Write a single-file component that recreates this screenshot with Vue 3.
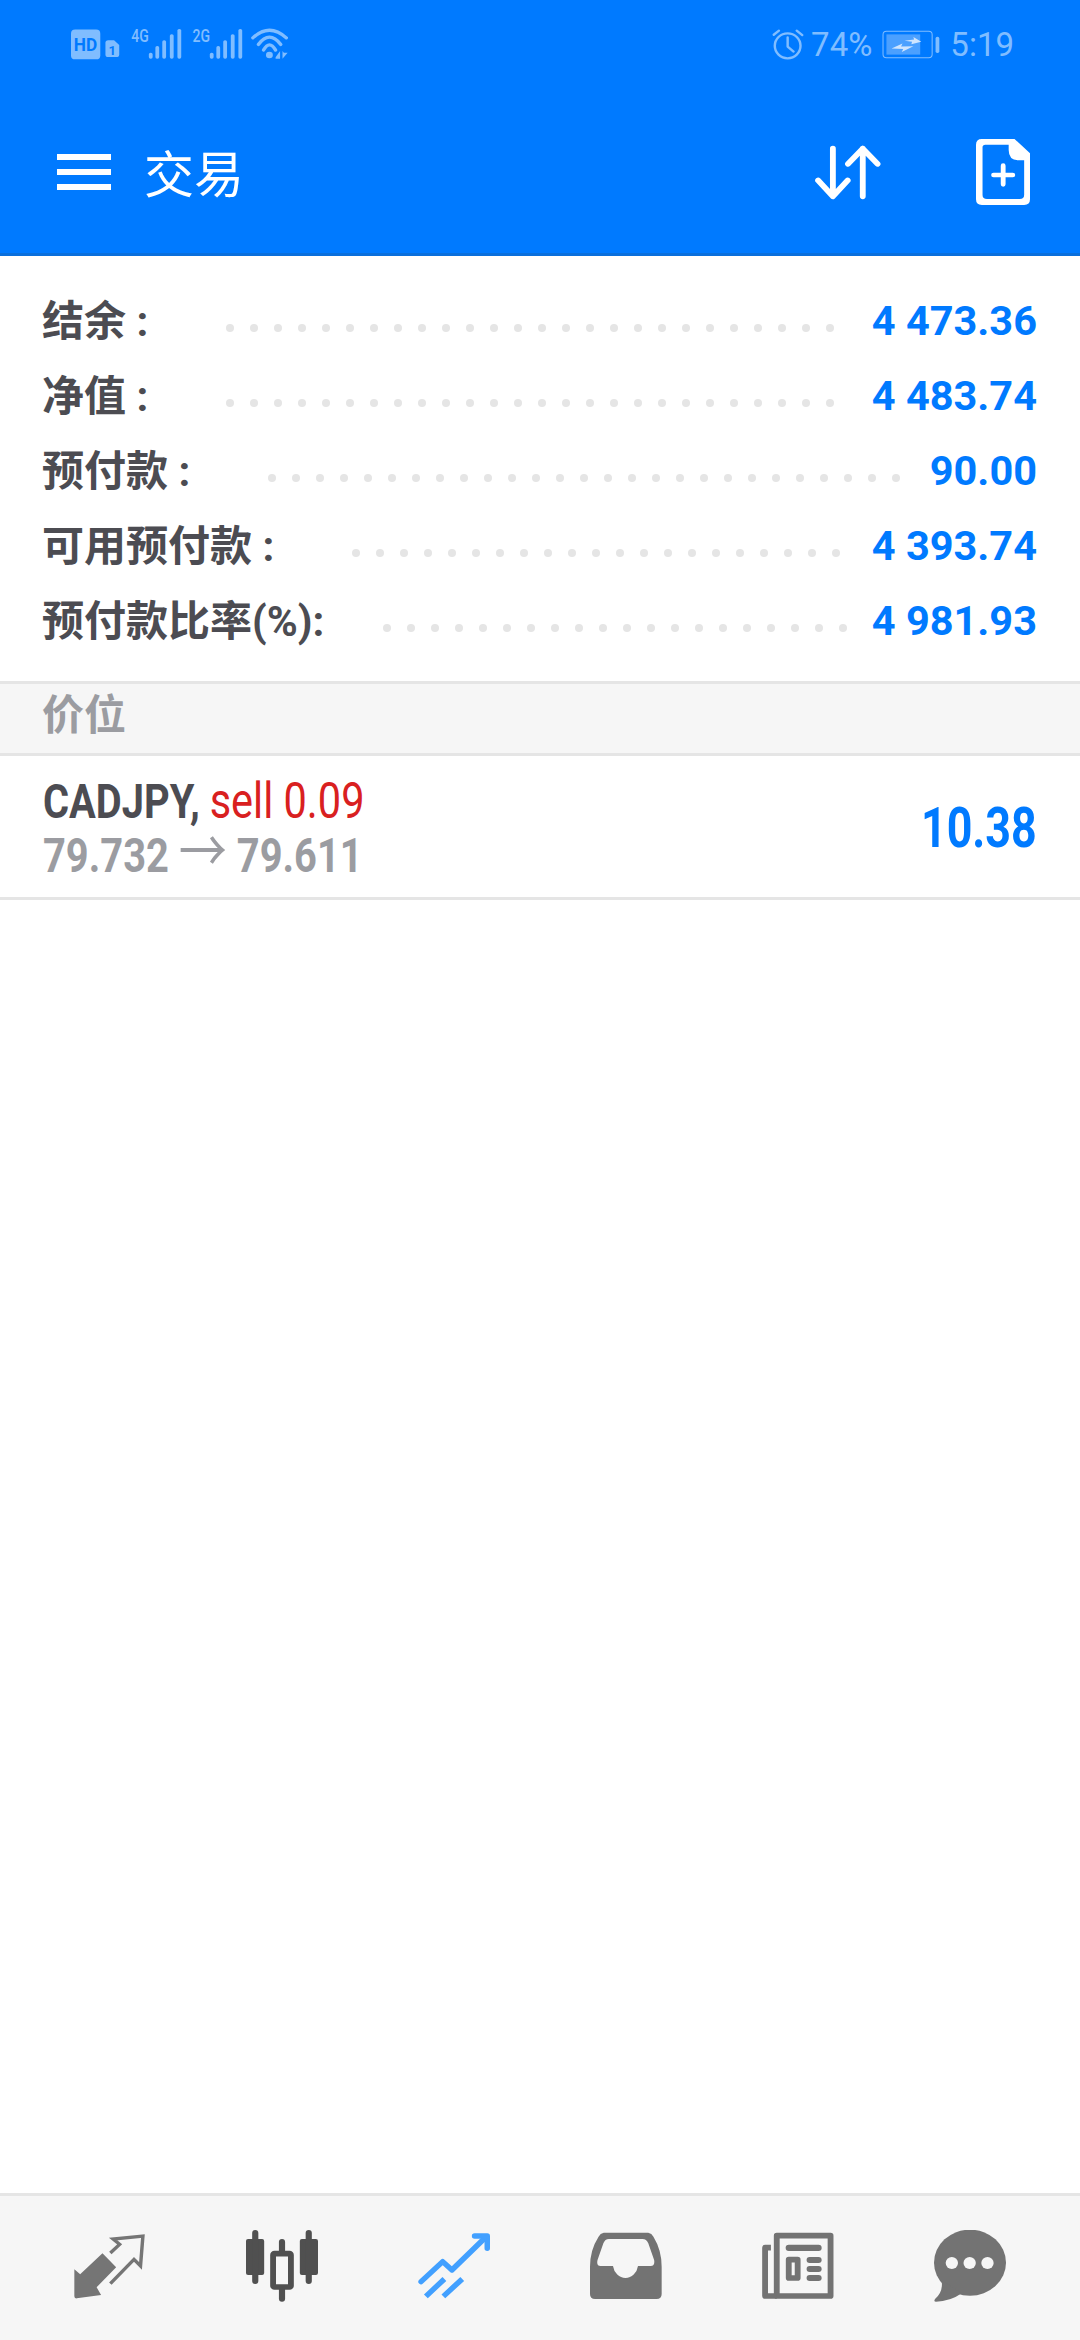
<template>
  <div class="page">
    <header class="top">
      <div class="status">
        <svg class="status-left" viewBox="207 55 630 130" preserveAspectRatio="none">
          <rect x="207" y="90" width="85" height="90" rx="12" fill="#80bdff" />
          <text x="249" y="156" class="st-hd" text-anchor="middle" textLength="68" lengthAdjust="spacingAndGlyphs">HD</text>
          <path d="M315 122H332L347 137V165Q347 173 339 173H315Q307 173 307 165V130Q307 122 315 122Z" fill="#80bdff" />
          <text x="327" y="166" class="st-sim" text-anchor="middle">1</text>
          <text x="382" y="128" class="st-net" textLength="51" lengthAdjust="spacingAndGlyphs">4G</text>
          <text x="560" y="128" class="st-net" textLength="51" lengthAdjust="spacingAndGlyphs">2G</text>
          <g v-for="dx in [0, 177]" :key="dx" :transform="`translate(${dx} 0)`">
            <rect v-for="b in bars" :key="b.x" :x="b.x" :y="b.y" width="11" :height="178 - b.y" rx="5" fill="#80bdff" />
          </g>
          <g fill="none" stroke="#80bdff" stroke-width="10" stroke-linecap="round">
            <path d="M735 115Q783 69 832 115" />
            <path d="M751 135Q783 91 816 135" />
            <path d="M766 152Q783 120 801 152" />
          </g>
          <circle cx="783" cy="167" r="10" fill="#80bdff" />
          <path d="M801 174L814 155V178H801ZM821 155V178L836 160H825Z" fill="#80bdff" />
        </svg>
        <div class="status-right">
          <svg class="alarm" viewBox="675 85 92 95" preserveAspectRatio="none">
            <g fill="none" stroke="#80bdff" stroke-linecap="round">
              <circle cx="720" cy="135" r="37" stroke-width="7" />
              <path d="M680 102L695 90M746 90L762 103" stroke-width="7" />
              <path d="M720 110V137L737 152" stroke-width="7" stroke-linejoin="round" />
            </g>
          </svg>
          <span class="status-text pct">74%</span>
          <svg class="battery" viewBox="990 90 170 86" preserveAspectRatio="none">
            <rect x="993" y="94" width="144" height="78" rx="10" fill="none" stroke="#80bdff" stroke-width="3" />
            <rect x="1003" y="103" width="99" height="60" fill="#4ba0ff" />
            <path d="M1018 145L1050 130L1046 139L1082 138L1048 155L1052 146ZM1056 122L1084 118L1082 111L1105 125L1076 132L1078 125Z" fill="#cfe5ff" />
            <rect x="1147" y="110" width="11" height="48" rx="5" fill="#80bdff" />
          </svg>
          <span class="status-text time">5:19</span>
        </div>
      </div>
      <div class="toolbar">
        <span class="burger"><i></i><i></i><i></i></span>
        <span class="title">交易</span>
        <svg class="tool-sort" viewBox="790 430 198 172" preserveAspectRatio="none">
          <path d="M845 444V588M802 540L845 588L888 540M932 444V588M889 490L932 444L975 490" fill="none" stroke="#fff" stroke-width="17" stroke-linecap="round" stroke-linejoin="round" />
        </svg>
        <svg class="tool-doc" viewBox="1263 417 157 198" preserveAspectRatio="none">
          <path fill-rule="evenodd" fill="#fff" d="M1280 417H1375L1420 460V598Q1420 615 1403 615H1280Q1263 615 1263 598V434Q1263 417 1280 417ZM1290 434Q1282 434 1282 442V585Q1282 597 1295 597H1390Q1403 597 1403 585V481H1385Q1358 480 1358 450V434Z" />
          <path d="M1342 497V553M1314 525H1370" fill="none" stroke="#fff" stroke-width="14" stroke-linecap="round" />
        </svg>
      </div>
    </header>

    <main class="content">
      <section class="summary">
        <div v-for="row in summary" :key="row.label" class="sum-row">
          <span class="sum-label" :style="{ width: row.dotsAt - 42 + 'px' }">{{ row.label }}</span>
          <span class="sum-dots"><i v-for="n in row.dots" :key="n"></i></span>
          <span class="sum-value">{{ row.value }}</span>
        </div>
      </section>
      <div class="section-head">价位</div>
      <div class="position">
        <div class="pos-left">
          <div class="pos-line"><b>CADJPY,</b> <span class="pos-side">sell 0.09</span></div>
          <div class="pos-line pos-price">79.732 <span class="pos-arrow">→</span> 79.611</div>
        </div>
        <div class="pos-profit">10.38</div>
      </div>
    </main>

    <nav class="tabs">
      <svg class="tab" viewBox="214 150 210 216" preserveAspectRatio="none">
        <path d="M215 268L232 283L297 220L337 262L280 322L293 345L222 355Q215 356 215 349Z" fill="#757575" />
        <path d="M320 219L347 193L328 177L415 168L408 258L389 238L320 311" fill="none" stroke="#757575" stroke-width="10" />
      </svg>
      <svg class="tab" viewBox="714 150 210 216" preserveAspectRatio="none">
        <g fill="#505050">
          <rect x="714" y="177" width="53" height="108" rx="6" />
          <rect x="732" y="150" width="18" height="162" rx="9" />
          <rect x="871" y="177" width="53" height="108" rx="6" />
          <rect x="888" y="150" width="18" height="162" rx="9" />
          <rect x="810" y="177" width="18" height="188" rx="9" />
        </g>
        <rect x="793" y="221" width="52" height="100" rx="4" fill="#f6f6f6" stroke="#505050" stroke-width="17" />
      </svg>
      <svg class="tab" viewBox="1213 150 210 216" preserveAspectRatio="none">
        <g fill="none" stroke="#42a0ff" stroke-width="16" stroke-linejoin="round">
          <path d="M1222 305L1285 245L1312 270L1408 174" stroke-linecap="round" />
          <path d="M1378 168H1415V205" stroke-linecap="round" />
          <path d="M1236 349L1290 297M1287 349L1342 297" />
        </g>
      </svg>
      <svg class="tab" viewBox="145 150 210 216" preserveAspectRatio="none">
        <path fill-rule="evenodd" fill="#737373" d="M185 158H315Q325 160 330 170Q354 210 354 260V342Q354 357 339 357H160Q145 357 145 342V260Q145 210 170 170Q175 160 185 158ZM200 177Q189 177 184 190L167 240Q163 258 176 258H212A37 43 0 0 0 285 258H322Q335 258 332 240L315 190Q310 177 298 177Z" />
      </svg>
      <svg class="tab" viewBox="645 150 210 216" preserveAspectRatio="none">
        <g fill="none" stroke="#737373" stroke-width="17" stroke-linejoin="round">
          <rect x="688" y="167" width="157" height="181" />
          <path d="M671 203H654V348H688" />
          <rect x="723" y="239" width="26" height="55" />
        </g>
        <g fill="#737373">
          <rect x="714" y="194" width="105" height="19" rx="9" />
          <rect x="775" y="231" width="44" height="18" rx="9" />
          <rect x="775" y="258" width="44" height="18" rx="9" />
          <rect x="775" y="285" width="44" height="18" rx="9" />
        </g>
      </svg>
      <svg class="tab" viewBox="1144 150 210 216" preserveAspectRatio="none">
        <ellipse cx="1249" cy="248" rx="105" ry="99" fill="#737373" />
        <path d="M1166 300Q1172 335 1147 357Q1142 365 1150 365Q1190 365 1225 340Z" fill="#737373" />
        <g fill="#f6f6f6">
          <circle cx="1196" cy="249" r="18" />
          <circle cx="1248" cy="249" r="18" />
          <circle cx="1300" cy="249" r="18" />
        </g>
      </svg>
    </nav>
  </div>
</template>

<script setup>
const bars = [
  { x: 433, y: 160 },
  { x: 452, y: 140 },
  { x: 472, y: 122 },
  { x: 494, y: 104 },
  { x: 516, y: 88 }
]

// dotsAt = x of the first leader dot, dots = how many of them
const summary = [
  { label: '结余 :', value: '4 473.36', dotsAt: 226, dots: 26 },
  { label: '净值 :', value: '4 483.74', dotsAt: 226, dots: 26 },
  { label: '预付款 :', value: '90.00', dotsAt: 268, dots: 27 },
  { label: '可用预付款 :', value: '4 393.74', dotsAt: 352, dots: 21 },
  { label: '预付款比率(%):', value: '4 981.93', dotsAt: 383, dots: 20 }
]
</script>

<style>
body {
  background: #fff;
}
</style>

<style scoped>
.page {
  width: 1080px;
  height: 2340px;
  display: flex;
  flex-direction: column;
  overflow: hidden;
  font-family: Roboto, "Noto Sans CJK SC", sans-serif;
}

.top {
  height: 256px;
  box-sizing: border-box;
  background: #007aff;
  border-bottom: 3px solid #0a6fdc;
  flex: none;
}

.status {
  height: 91px;
  box-sizing: border-box;
  padding: 18px 66px 0 71px;
  display: flex;
  justify-content: space-between;
  align-items: flex-start;
}

.status-left {
  width: 217px;
  height: 43px;
}

.status-right {
  display: flex;
  align-items: center;
  height: 33px;
  margin-top: 10px;
}

.alarm {
  width: 32px;
  height: 32px;
}

.status-text {
  font-size: 33px;
  color: #80bdff;
  line-height: 33px;
}

.pct {
  margin-left: 7px;
}

.battery {
  width: 58px;
  height: 29px;
  margin-left: 10px;
}

.time {
  margin-left: 10px;
}

.st-hd {
  font-size: 58px;
  font-weight: 700;
  fill: #007aff;
}

.st-sim {
  font-size: 38px;
  font-weight: 700;
  fill: #007aff;
}

.st-net {
  font-size: 55px;
  font-weight: 500;
  fill: #80bdff;
}

.toolbar {
  height: 162px;
  box-sizing: border-box;
  padding: 0 50px 0 57px;
  display: flex;
  align-items: center;
}

.burger {
  width: 54px;
  display: flex;
  flex-direction: column;
  gap: 9px;
}

.burger i {
  display: block;
  height: 6px;
  background: #fff;
}

.title {
  margin-left: 33px;
  margin-top: -2px;
  font: 50px/1 "Noto Sans CJK SC", sans-serif;
  color: #fff;
}

.tool-sort {
  margin-left: auto;
  width: 68px;
  height: 57px;
}

.tool-doc {
  margin-left: 94px;
  width: 54px;
  height: 66px;
}

.content {
  flex: 1;
}

.summary {
  padding: 27px 43px 23px 42px;
}

.sum-row {
  height: 75px;
  display: flex;
  align-items: center;
}

.sum-label {
  flex: none;
  margin-top: -6px;
  font-size: 42px;
  font-weight: 700;
  color: #4c4c52;
  white-space: nowrap;
}

.sum-dots {
  display: flex;
  gap: 16px;
  margin-top: 14px;
}

.sum-dots i {
  width: 8px;
  height: 8px;
  border-radius: 50%;
  background: #e5e5e5;
}

.sum-value {
  margin-left: auto;
  font-size: 41.5px;
  font-weight: 700;
  color: #007aff;
}

.section-head {
  height: 75px;
  box-sizing: border-box;
  padding-left: 42px;
  border-top: 3px solid #e5e5e5;
  border-bottom: 3px solid #e5e5e5;
  background: #f6f6f6;
  font-size: 42px;
  font-weight: 700;
  line-height: 64px;
  color: #9b9ca1;
}

.position {
  height: 144px;
  box-sizing: border-box;
  padding: 3px 43px 0;
  border-bottom: 3px solid #e5e5e5;
  display: flex;
  justify-content: space-between;
  align-items: center;
}

.pos-line {
  font-size: 48px;
  line-height: 51px;
  white-space: nowrap;
  color: #4c4c52;
  transform: scaleX(0.83);
  transform-origin: left center;
}

.pos-side {
  font-size: 50px;
  color: #d9201f;
}

.pos-price {
  font-weight: 700;
  color: #9b9ca1;
}

.pos-arrow {
  font-size: 58px;
  font-weight: 400;
}

.pos-profit {
  font-size: 56px;
  font-weight: 700;
  color: #007aff;
  transform: scaleX(0.8);
  transform-origin: right center;
}

.tabs {
  height: 147px;
  box-sizing: border-box;
  padding: 34px 74px 0;
  border-top: 3px solid #e5e5e5;
  background: #f6f6f6;
  display: flex;
  justify-content: space-between;
  align-items: flex-start;
  flex: none;
}

.tab {
  width: 72px;
  height: 72px;
}
</style>
